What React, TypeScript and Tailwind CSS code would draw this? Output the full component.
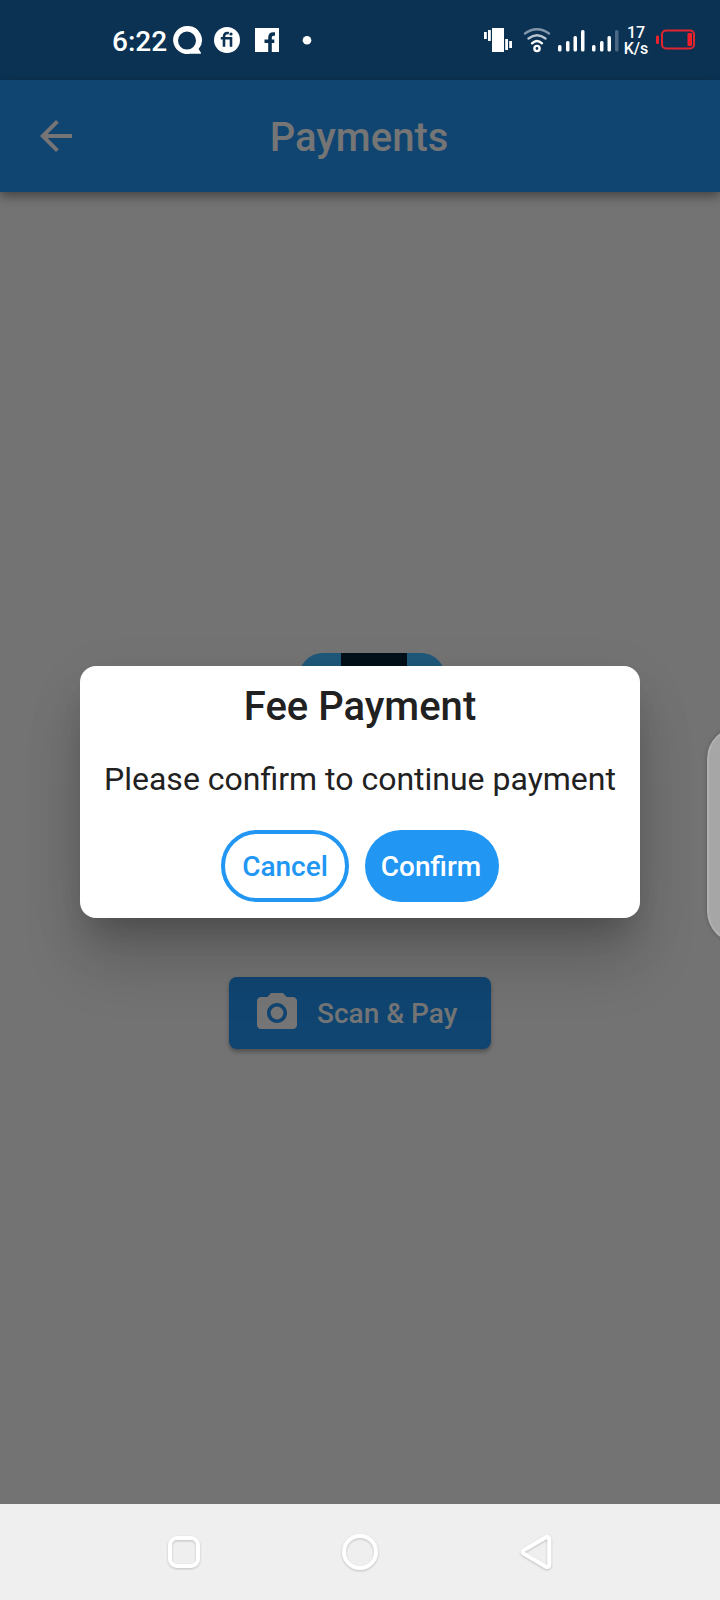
import React from "react";

function StatusBar() {
  return (
    <div className="flex h-20 w-full shrink-0 bg-[#0b3253] text-white">
      <div className="w-28 shrink-0" />
      <div className="w-[60px] shrink-0 pt-[23px] text-[28px] leading-[38px] font-medium whitespace-nowrap">
        <span>6:22</span>
      </div>
      <svg className="h-20 w-[150px] shrink-0" viewBox="172 0 150 80" aria-hidden="true">
        <path
          fillRule="evenodd"
          fill="#fff"
          d="M187 26a14 14 0 1 0 3 27.7h10.600q.8 0 .2-1.200l-2.200-3.500A14 14 0 0 0 187 26zm0 5.600a9 9 0 1 1 0 18a9 9 0 0 1 0-18z"
        />
        <circle cx="227" cy="40" r="13" fill="#fff" />
        <path
          d="M224 46.800v-10c0-3 1.800-4.300 4.800-3.500M220.800 38.300h10.200v8.500"
          fill="none"
          stroke="#0b3253"
          strokeWidth="2.600"
        />
        <circle cx="231" cy="34" r="1.600" fill="#0b3253" />
        <rect x="255" y="28" width="24" height="24" fill="#fff" />
        <path d="M270 52V37.500q0-3.500 3.500-3.500h1.500M264.500 41.200h9.800" fill="none" stroke="#0b3253" strokeWidth="3.600" />
        <circle cx="307" cy="40.300" r="4.300" fill="#fff" />
      </svg>
      <div className="grow" />
      <svg className="h-20 w-[142px] shrink-0" viewBox="478 0 142 80" aria-hidden="true">
        <path
          fill="#fff"
          d="M492 28h12v24h-12zM484 32h2.800v7h-2.800zM488 30h2.800v11h-2.800zM505.200 39h2.800v11h-2.800zM509.200 41h2.800v7h-2.800z"
        />
        <g fill="none" strokeLinecap="round" strokeWidth="2.400" stroke="#fff">
          <path d="M525 33.500q12-8.500 24 0" stroke="#8196aa" />
          <path d="M528.500 38.500q8.500-6.500 17 0" stroke="#b8c4ce" />
          <path d="M532 43.300q5-4.500 10 0" />
          <circle cx="537" cy="48.500" r="2.600" />
        </g>
        <g fill="#fff">
          <rect x="558" y="45" width="3.500" height="6.500" rx="1.500" />
          <rect x="566" y="41" width="3.500" height="10.500" rx="1.500" />
          <rect x="573.500" y="36" width="3.500" height="15.500" rx="1.500" />
          <rect x="581" y="30" width="3.500" height="21.500" rx="1.500" />
          <rect x="592" y="45" width="3.500" height="6.500" rx="1.500" />
          <rect x="600" y="41" width="3.500" height="10.500" rx="1.500" />
          <rect x="607.500" y="36" width="3.500" height="15.500" rx="1.500" />
          <rect x="615" y="30" width="3.500" height="21.500" rx="1.500" fill="#4a6883" />
        </g>
      </svg>
      <div className="flex w-8 shrink-0 flex-col items-center pt-[25px] text-[16px] leading-[16px] font-medium whitespace-nowrap">
        <span>17</span>
        <span>K/s</span>
      </div>
      <svg className="h-20 w-[68px] shrink-0" viewBox="652 0 68 80" aria-hidden="true">
        <rect x="656" y="35.500" width="3" height="8.500" rx="1" fill="#e9232d" />
        <rect x="662" y="30.500" width="32" height="18" rx="4" fill="none" stroke="#e1252f" strokeWidth="2" />
        <rect x="687.500" y="33" width="4.500" height="13" rx="1" fill="#f21f28" />
      </svg>
    </div>
  );
}

function AppBar() {
  return (
    <header className="z-10 flex h-28 shrink-0 items-center bg-[#104572] text-[#757575] shadow-[0_4px_10px_rgba(0,0,0,0.42)]">
      <div className="flex w-28 justify-center">
        <svg width="48" height="48" viewBox="0 0 24 24" fill="currentColor" aria-hidden="true">
          <path d="M20 11H7.830l5.590-5.590L12 4l-8 8 8 8 1.410-1.410L7.830 13H20v-2z" />
        </svg>
      </div>
      <h1 className="flex-1 pt-1 pr-0.5 text-center text-[40px] font-medium">Payments</h1>
      <div className="w-28" />
    </header>
  );
}

function PhoneArt() {
  return (
    <div className="flex h-[240px] w-[146px] overflow-hidden rounded-[24px] bg-[#1e5878] pl-[42px]">
      <div className="h-12 w-[66px] bg-[#02101a]" />
    </div>
  );
}

function ScanButton() {
  return (
    <button className="flex h-18 w-[262px] items-center rounded-lg bg-[#104572] pl-6 text-[28px] font-medium text-[#757575] shadow-[0_3px_4px_rgba(0,0,0,0.3)]">
      <svg width="48" height="48" viewBox="0 0 24 24" fill="currentColor" aria-hidden="true">
        <circle cx="12" cy="12" r="3.200" />
        <path d="M9 2L7.170 4H4c-1.100 0-2 .9-2 2v12c0 1.100.9 2 2 2h16c1.100 0 2-.9 2-2V6c0-1.100-.9-2-2-2h-3.170L15 2H9zm3 15c-2.760 0-5-2.240-5-5s2.240-5 5-5 5 2.240 5 5-2.240 5-5 5z" />
      </svg>
      <span className="ml-4 pt-0.5 whitespace-nowrap">Scan &amp; Pay</span>
    </button>
  );
}

function PaymentDialog() {
  return (
    <div
      role="dialog"
      className="absolute top-[666px] left-20 flex h-[252px] w-[560px] flex-col items-center rounded-2xl bg-white text-[#212121] shadow-[0_22px_30px_-14px_rgba(0,0,0,0.2),0_48px_60px_0_rgba(0,0,0,0.14),0_18px_60px_0_rgba(0,0,0,0.08)]"
    >
      <h2 className="mt-[17px] text-[40px] leading-[48px] font-medium whitespace-nowrap">Fee Payment</h2>
      <p className="mt-7 text-[32px] leading-[40px] whitespace-nowrap">
        Please confirm to continue payment
      </p>
      <div className="mt-[31px] flex gap-4 text-[28px] font-medium">
        <button className="h-18 w-32 rounded-full border-4 border-[#2196f3] pt-0.5 text-[#2196f3]">Cancel</button>
        <button className="h-18 w-[134px] rounded-full bg-[#2196f3] pt-0.5 pr-0.5 text-white">Confirm</button>
      </div>
    </div>
  );
}

function NavBar() {
  return (
    <nav className="flex h-24 shrink-0 items-center justify-between bg-[#efefef] px-[160px]">
      <svg className="h-12 w-12 overflow-visible drop-shadow-[0_1px_1px_rgba(0,0,0,0.2)]" viewBox="0 0 48 48" fill="none" stroke="#fff" strokeWidth="4">
        <rect x="10" y="10" width="28" height="28" rx="7" />
      </svg>
      <svg className="h-12 w-12 overflow-visible drop-shadow-[0_1px_1px_rgba(0,0,0,0.2)]" viewBox="0 0 48 48" fill="none" stroke="#fff" strokeWidth="4">
        <circle cx="24" cy="24" r="16" />
      </svg>
      <svg className="h-12 w-12 overflow-visible drop-shadow-[0_1px_1px_rgba(0,0,0,0.2)]" viewBox="0 0 48 48" fill="none" stroke="#fff" strokeWidth="4" strokeLinejoin="round">
        <path d="M11.600 22.400L34 9.200Q37.300 8.300 37.300 11.500V36.500Q37.300 39.700 34 38.800L11.600 25.600Q9.600 24 11.600 22.400z" />
      </svg>
    </nav>
  );
}

export default function App() {
  return (
    <div className="relative flex h-[1600px] w-[720px] flex-col overflow-hidden bg-[#737373] font-['Roboto',sans-serif]">
      <StatusBar />
      <AppBar />
      <main className="flex flex-1 flex-col items-center">
        <div className="mt-[461px] ml-6">
          <PhoneArt />
        </div>
        <div className="mt-[84px]">
          <ScanButton />
        </div>
      </main>
      <NavBar />
      <PaymentDialog />
      <div className="absolute top-[727px] left-[707px] h-[216px] w-16 rounded-[32px] border-2 border-[#b0b0b0] bg-[#a6a6a6] shadow-[0_0_4px_rgba(0,0,0,0.25)]" />
    </div>
  );
}
